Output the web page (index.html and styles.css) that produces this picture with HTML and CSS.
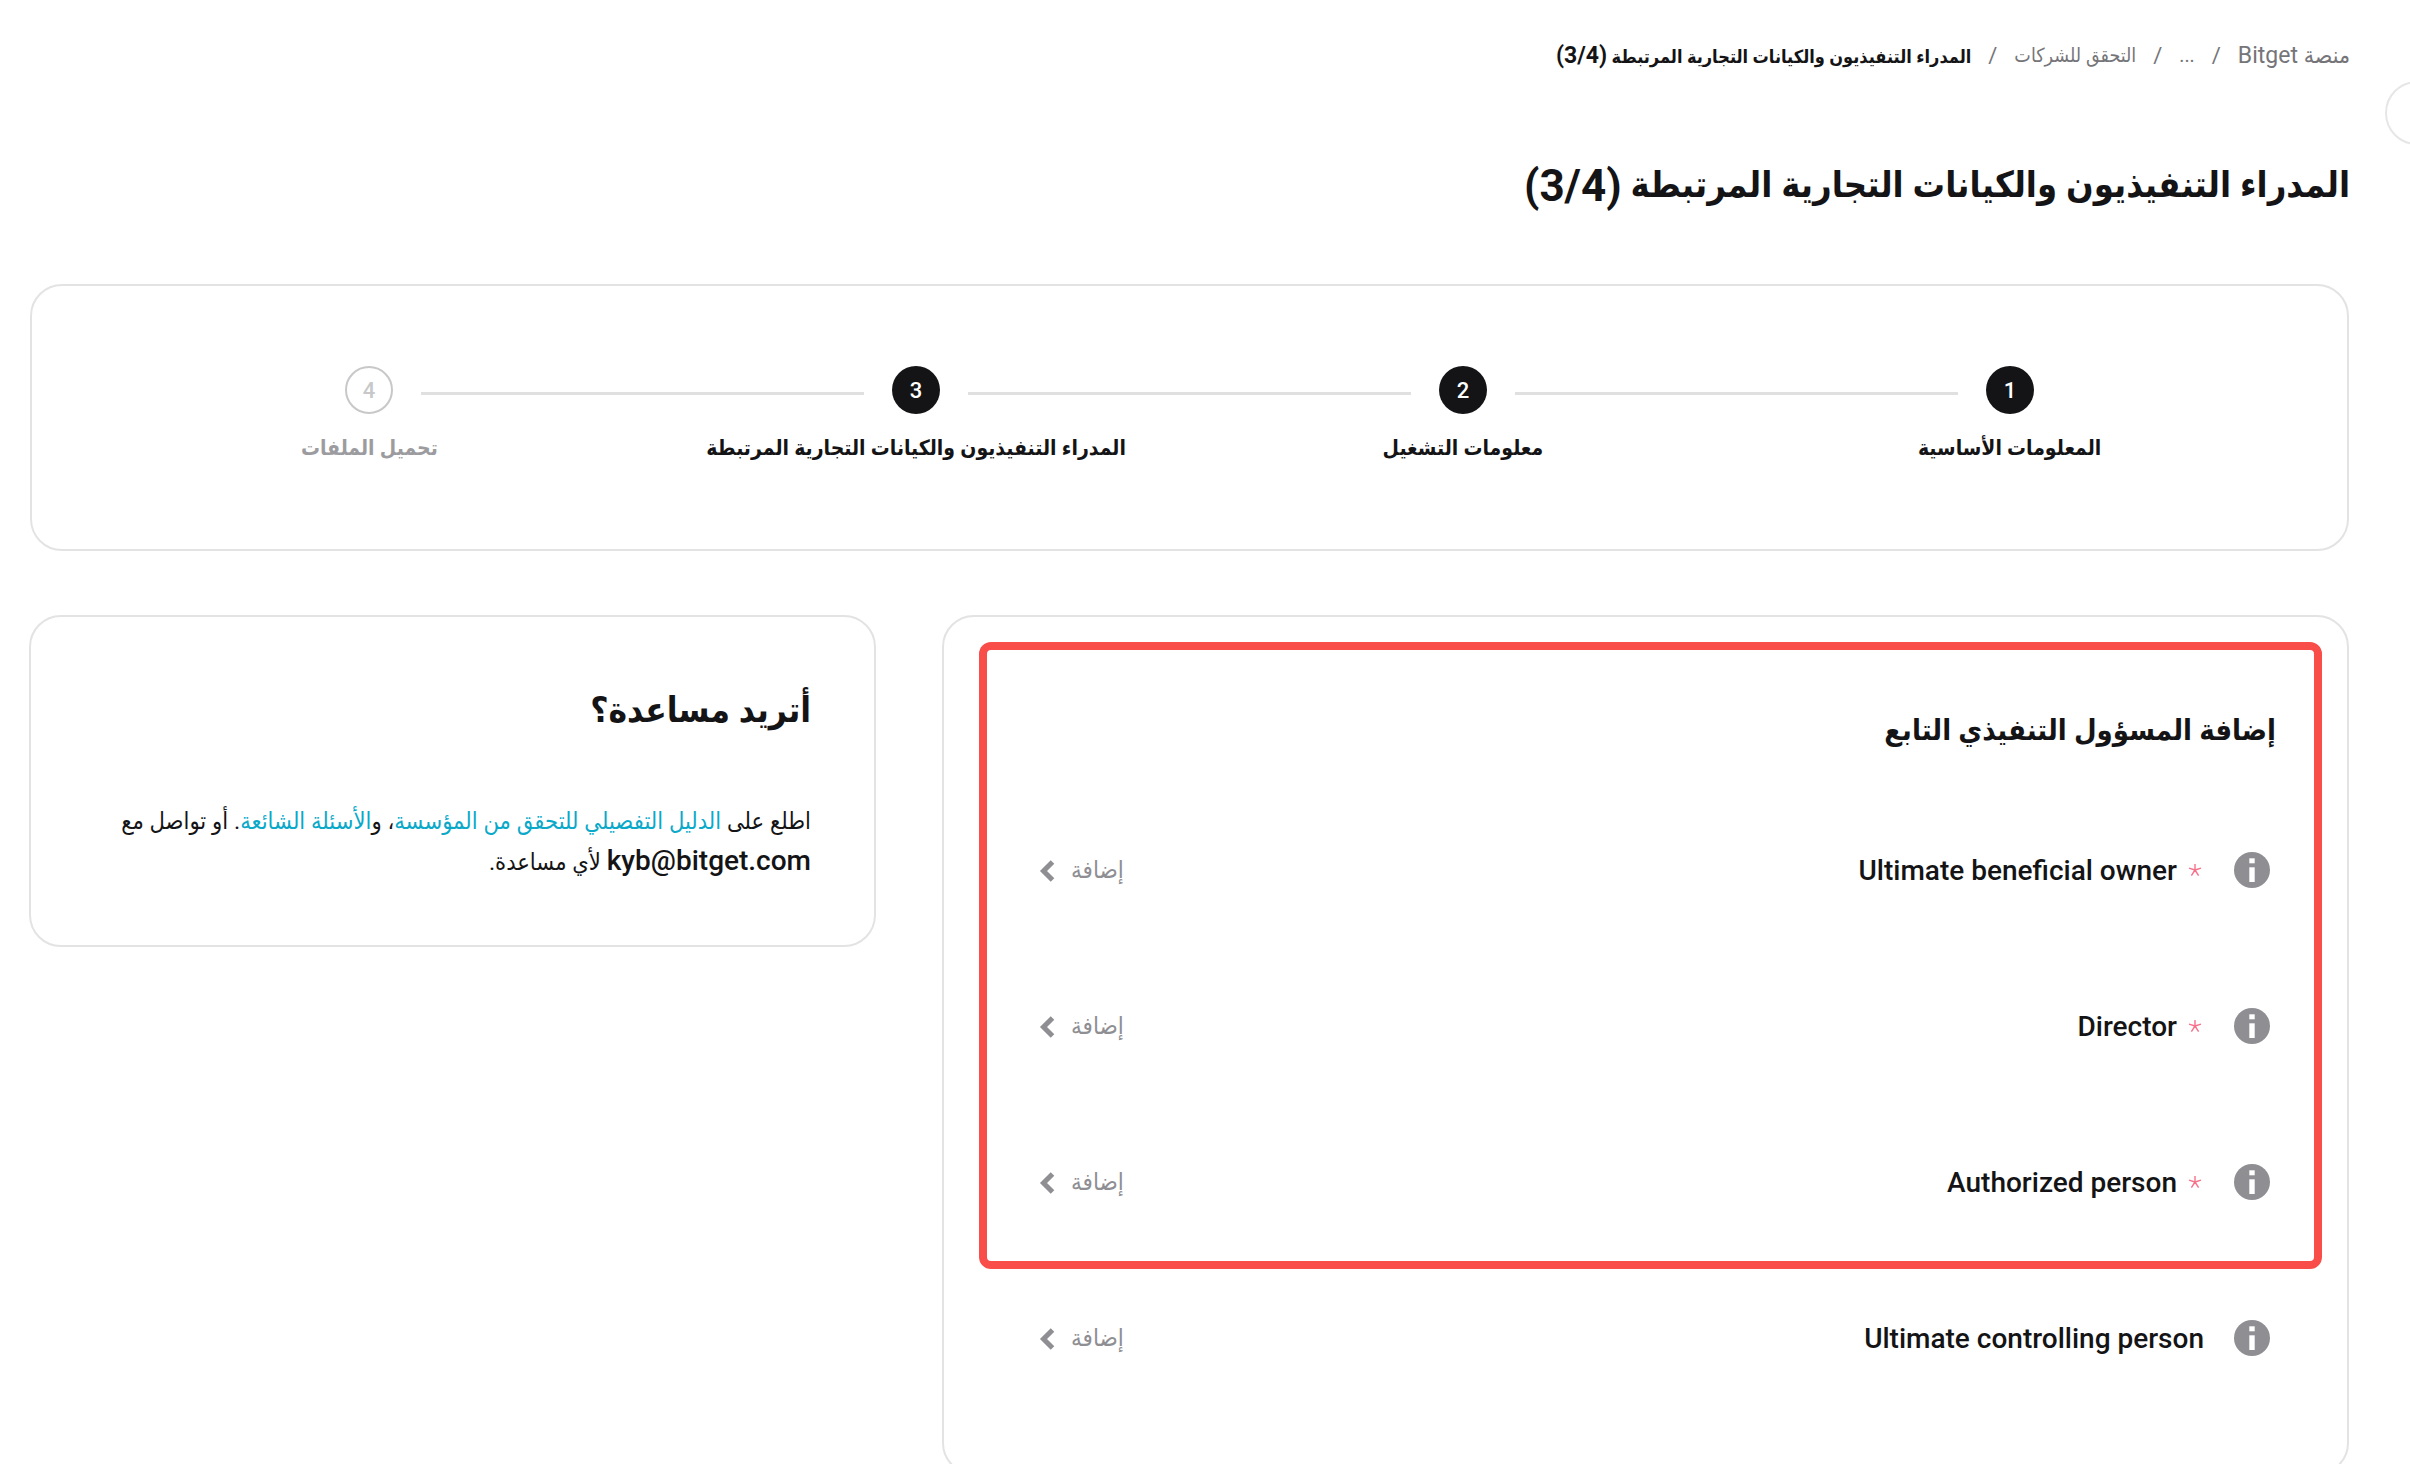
FILE: index.html
```html
<!DOCTYPE html>
<html lang="ar" dir="rtl">
<head>
  <meta charset="UTF-8" />
  <title>المدراء التنفيذيون والكيانات التجارية المرتبطة (3/4)</title>
  <link rel="stylesheet" href="styles.css">
</head>
<body>
  <div class="collapse-btn"></div>

  <div class="container">
    <nav class="breadcrumb">
      <a class="crumb-root">منصة Bitget</a>
      <span class="sep">/</span>
      <a>...</a>
      <span class="sep">/</span>
      <a>التحقق للشركات</a>
      <span class="sep">/</span>
      <strong>المدراء التنفيذيون والكيانات التجارية المرتبطة <span class="latin">(3/4)</span></strong>
    </nav>

    <h1 class="page-title">المدراء التنفيذيون والكيانات التجارية المرتبطة <span class="latin">(3/4)</span></h1>

    <section class="card stepper">
      <div class="step-track">
        <span class="step-num">1</span>
        <span class="step-line"></span>
        <span class="step-num">2</span>
        <span class="step-line"></span>
        <span class="step-num">3</span>
        <span class="step-line"></span>
        <span class="step-num todo">4</span>
      </div>
      <div class="step-labels">
        <span>المعلومات الأساسية</span>
        <span>معلومات التشغيل</span>
        <span>المدراء التنفيذيون والكيانات التجارية المرتبطة</span>
        <span class="todo">تحميل الملفات</span>
      </div>
    </section>

    <div class="columns">
      <section class="card main-panel">
        <div class="highlight">
          <h2 class="section-title">إضافة المسؤول التنفيذي التابع</h2>

          <div class="row">
            <svg class="info" viewBox="0 0 36 36"><circle cx="18" cy="18" r="18"/><rect class="dot" x="15.3" y="6.3" width="5.4" height="5"/><rect class="dot" x="15.3" y="15.3" width="5.4" height="14.7"/></svg>
            <svg class="star" viewBox="0 0 14 14"><path d="M7 1V7M1 5.2L7 7M13 5.2L7 7M3.4 12.6L7 7M10.6 12.6L7 7"/></svg>
            <span class="row-label" dir="ltr">Ultimate beneficial owner</span>
            <a class="row-add">إضافة<svg class="chevron" viewBox="0 0 16 22"><path d="M13.5 2L4.5 11L13.5 20"/></svg></a>
          </div>

          <div class="row">
            <svg class="info" viewBox="0 0 36 36"><circle cx="18" cy="18" r="18"/><rect class="dot" x="15.3" y="6.3" width="5.4" height="5"/><rect class="dot" x="15.3" y="15.3" width="5.4" height="14.7"/></svg>
            <svg class="star" viewBox="0 0 14 14"><path d="M7 1V7M1 5.2L7 7M13 5.2L7 7M3.4 12.6L7 7M10.6 12.6L7 7"/></svg>
            <span class="row-label" dir="ltr">Director</span>
            <a class="row-add">إضافة<svg class="chevron" viewBox="0 0 16 22"><path d="M13.5 2L4.5 11L13.5 20"/></svg></a>
          </div>

          <div class="row">
            <svg class="info" viewBox="0 0 36 36"><circle cx="18" cy="18" r="18"/><rect class="dot" x="15.3" y="6.3" width="5.4" height="5"/><rect class="dot" x="15.3" y="15.3" width="5.4" height="14.7"/></svg>
            <svg class="star" viewBox="0 0 14 14"><path d="M7 1V7M1 5.2L7 7M13 5.2L7 7M3.4 12.6L7 7M10.6 12.6L7 7"/></svg>
            <span class="row-label" dir="ltr">Authorized person</span>
            <a class="row-add">إضافة<svg class="chevron" viewBox="0 0 16 22"><path d="M13.5 2L4.5 11L13.5 20"/></svg></a>
          </div>
        </div>

        <div class="row row-plain">
          <svg class="info" viewBox="0 0 36 36"><circle cx="18" cy="18" r="18"/><rect class="dot" x="15.3" y="6.3" width="5.4" height="5"/><rect class="dot" x="15.3" y="15.3" width="5.4" height="14.7"/></svg>
          <span class="row-label" dir="ltr">Ultimate controlling person</span>
          <a class="row-add">إضافة<svg class="chevron" viewBox="0 0 16 22"><path d="M13.5 2L4.5 11L13.5 20"/></svg></a>
        </div>
      </section>

      <aside class="card help">
        <h2 class="help-title">أتريد مساعدة؟</h2>
        <p class="help-text">اطلع على <a>الدليل التفصيلي للتحقق من المؤسسة</a>، و<a>الأسئلة الشائعة</a>. أو تواصل مع <b>kyb@bitget.com</b> لأي مساعدة.</p>
      </aside>
    </div>
  </div>
</body>
</html>
```

FILE: styles.css
```css
* {
  margin: 0;
  padding: 0;
  box-sizing: border-box;
}

html, body {
  height: 100%;
  overflow: hidden;
}

body {
  background: #fff;
  color: #141416;
  font-family: Roboto, "DejaVu Sans Condensed", "DejaVu Sans", sans-serif;
  position: relative;
}

.collapse-btn {
  position: absolute;
  top: 81px;
  left: 2385px;
  width: 64px;
  height: 64px;
  border: 2px solid #e6e6e6;
  border-radius: 50%;
  background: #fff;
}

.container {
  padding: 0 61px 0 30px;
}

.breadcrumb {
  display: flex;
  align-items: center;
  height: 110px;
  margin-right: -1px;
  font-size: 19.5px;
  color: #757579;
}

.breadcrumb .crumb-root {
  font-size: 23px;
}

.breadcrumb .sep {
  margin: 0 17px;
  font-size: 22px;
}

.breadcrumb strong {
  color: #141416;
  font-size: 18px;
  font-weight: 700;
}

.breadcrumb .latin {
  font-size: 23px;
  line-height: 1;
}

.page-title {
  font-size: 36px;
  font-weight: 700;
  line-height: 60px;
  height: 60px;
  margin: 45px -1px 0 0;
}

.page-title .latin {
  font-size: 44px;
  line-height: 1;
  vertical-align: -4px;
}

.card {
  background: #fff;
  border: 2px solid #e3e3e3;
  border-radius: 32px;
}

.stepper {
  height: 267px;
  margin-top: 69px;
  padding: 80px 64px 0;
}

.step-track {
  display: flex;
  align-items: center;
  padding: 0 249px;
}

.step-num {
  flex: none;
  width: 48px;
  height: 48px;
  border-radius: 50%;
  background: #141416;
  color: #fff;
  font-size: 22px;
  font-weight: 500;
  display: flex;
  align-items: center;
  justify-content: center;
}

.step-num.todo {
  background: #fff;
  border: 2px solid #c8c8ca;
  color: #c8c8ca;
}

.step-line {
  flex: 1;
  height: 3px;
  margin: 6px 28px 0;
  background: #e0e0e0;
}

.step-labels {
  display: grid;
  grid-template-columns: repeat(4, 1fr);
  margin-top: 16px;
  font-size: 21px;
  font-weight: 700;
  line-height: 36px;
  text-align: center;
}

.step-labels .todo {
  color: #9c9ca0;
}

.columns {
  display: flex;
  align-items: flex-start;
  gap: 66px;
  margin-top: 64px;
}

.main-panel {
  flex: none;
  width: 1407px;
  height: 860px;
  padding: 25px 25px 0 35px;
}

.highlight {
  height: 627px;
  border: 8px solid #f94d4a;
  border-radius: 12px;
  padding: 0 0 0 52px;
}

.section-title {
  font-size: 29px;
  font-weight: 700;
  line-height: 48px;
  margin: 56px 38px 0 0;
}

.row {
  display: flex;
  align-items: center;
  height: 156px;
  padding-right: 44px;
}

.highlight .section-title + .row {
  margin-top: 38px;
}

.info {
  flex: none;
  width: 36px;
  height: 36px;
  fill: #8e8e93;
}

.info .dot {
  fill: #fff;
}

.star {
  flex: none;
  width: 14px;
  height: 14px;
  margin: 0 32px 0 11px;
  fill: none;
  stroke: #f7708a;
  stroke-width: 1.4;
}

.row-label {
  font-size: 28px;
  font-weight: 500;
}

.row-plain {
  padding: 0 52px 0 60px;
  margin-top: -9px;
}

.row-plain .row-label {
  margin-right: 30px;
}

.row-add {
  margin-right: auto;
  display: flex;
  align-items: center;
  gap: 16px;
  font-size: 24px;
  color: #8e8e93;
}

.chevron {
  width: 16px;
  height: 22px;
  margin-top: 2px;
  fill: none;
  stroke: #8e8e93;
  stroke-width: 5;
}

.help {
  flex: none;
  width: 847px;
  height: 332px;
  padding: 66px 63px 0 60px;
}

.help-title {
  font-size: 35px;
  font-weight: 700;
  line-height: 56px;
}

.help-text {
  margin-top: 62px;
  font-size: 23.5px;
  line-height: 41px;
}

.help-text a {
  color: #0aa9c9;
}

.help-text b {
  font-size: 28px;
  font-weight: 500;
  line-height: 1;
}
```
